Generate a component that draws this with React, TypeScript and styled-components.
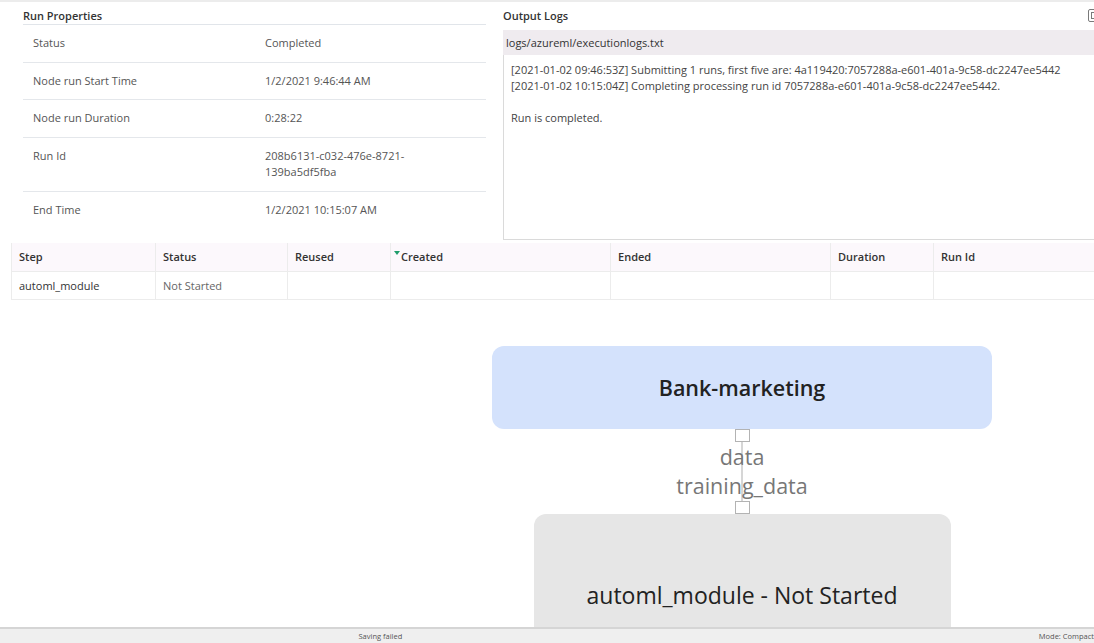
import React from "react";
import styled, { createGlobalStyle } from "styled-components";

const GlobalStyle = createGlobalStyle`
  html, body { margin: 0; padding: 0; }
  body {
    font-family: "Open Sans", "Noto Sans", sans-serif;
    background: #ffffff;
    width: 1094px;
    height: 643px;
    overflow: hidden;
  }
  * { box-sizing: border-box; }
`;

const Page = styled.div`
  width: 1094px;
  height: 643px;
  display: flex;
  flex-direction: column;
  overflow: hidden;
  border-top: 2px solid #ececec;
`;

const TopSection = styled.div`
  display: flex;
  gap: 17px;
  height: 238px;
  padding-left: 23px;
  flex-shrink: 0;
`;

const LeftPanel = styled.section`
  width: 463px;
  flex-shrink: 0;
  display: flex;
  flex-direction: column;
`;

const PanelTitle = styled.div`
  font-size: 11px;
  font-weight: 600;
  color: #333;
  line-height: 16px;
  padding-top: 6px;
`;

const PropTitle = styled(PanelTitle)`
  border-bottom: 1px solid #e1e5ea;
`;

const PropRow = styled.div`
  display: flex;
  padding: 10px 0 10px 10px;
  line-height: 16.5px;
  font-size: 11px;
  color: #555;
  border-bottom: 1px solid #e4e7eb;

  &:last-child {
    border-bottom: none;
  }
`;

const PropLabel = styled.div`
  width: 232px;
  flex-shrink: 0;
`;

const PropValue = styled.div`
  width: 170px;
`;

const RightPanel = styled.section`
  width: 600px;
  flex-shrink: 0;
  display: flex;
  flex-direction: column;
`;

const LogHeader = styled.div`
  height: 28px;
  display: flex;
  justify-content: space-between;
  align-items: flex-start;
  padding-right: 2px;
`;

const ExpandIcon = styled.span`
  width: 13px;
  height: 13px;
  margin-top: 7px;
  border: 1.5px solid #7a7a7a;
  border-radius: 2px;
  display: flex;
  align-items: center;
  justify-content: center;

  &::after {
    content: "";
    width: 5px;
    height: 5px;
    border: 1px solid #7a7a7a;
  }
`;

const PathBar = styled.div`
  height: 25px;
  line-height: 25px;
  background: #efebef;
  padding-left: 3px;
  font-size: 11px;
  color: #333;
`;

const LogBox = styled.pre`
  margin: 0;
  flex: 1;
  border: 1px solid #dadada;
  border-top: none;
  padding: 7px 7px;
  font-family: "Open Sans", "Noto Sans", sans-serif;
  font-size: 11px;
  line-height: 16px;
  color: #444;
  white-space: pre;
  overflow: hidden;
`;

const StepsTable = styled.table`
  margin: 3px 0 0 11px;
  border-collapse: collapse;
  table-layout: fixed;
  width: 1100px;
  flex-shrink: 0;
  font-size: 11px;
`;

const HeadCell = styled.th<{ $w: number }>`
  width: ${(p) => p.$w}px;
  height: 28px;
  padding: 0 0 0 7px;
  text-align: left;
  font-weight: 600;
  color: #333;
  background: #fcf8fc;
  border: 1px solid #ececec;
  border-top: none;
`;

const Cell = styled.td<{ $muted?: boolean }>`
  height: 28px;
  padding: 0 0 0 7px;
  color: ${(p) => (p.$muted ? "#666" : "#333")};
  border: 1px solid #ececec;
  white-space: nowrap;
`;

const SortMark = styled.span`
  display: inline-block;
  width: 0;
  height: 0;
  border-left: 3px solid transparent;
  border-right: 3px solid transparent;
  border-top: 4px solid #1f9d6b;
  vertical-align: top;
  margin: 2px 1px 0 -4px;
`;

const Canvas = styled.div`
  flex: 1;
  min-height: 0;
  overflow: hidden;
`;

const Graph = styled.div`
  margin: 46px 0 0 492px;
  width: 500px;
  display: flex;
  flex-direction: column;
  align-items: center;
`;

const DatasetNode = styled.div`
  width: 100%;
  height: 83px;
  border-radius: 12px;
  background: #d4e2fc;
  display: flex;
  align-items: center;
  justify-content: center;
  font-size: 21.5px;
  font-weight: 600;
  color: #222;
  flex-shrink: 0;
`;

const Connector = styled.div`
  position: relative;
  display: flex;
  flex-direction: column;
  align-items: center;
  flex-shrink: 0;

  &::before {
    content: "";
    position: absolute;
    left: 50%;
    top: 13px;
    bottom: 13px;
    width: 2px;
    margin-left: -1px;
    background: #d6d6d6;
  }
`;

const Port = styled.div`
  width: 15px;
  height: 13px;
  border: 1.5px solid #b3b3b3;
  background: #fff;
  position: relative;
  flex-shrink: 0;
`;

const PortLabel = styled.div`
  position: relative;
  font-size: 21.5px;
  line-height: 29.5px;
  color: #777;
  white-space: nowrap;
`;

const ModuleNode = styled.div`
  width: 417px;
  height: 130px;
  border-radius: 12px;
  background: #e6e6e6;
  padding-top: 67px;
  text-align: center;
  font-size: 23px;
  line-height: 28px;
  color: #222;
  flex-shrink: 0;
  white-space: nowrap;
`;

const StatusBar = styled.footer`
  height: 16px;
  flex-shrink: 0;
  border-top: 2px solid #d5d5d5;
  background: #efefef;
  display: flex;
  font-size: 7.5px;
  line-height: 14px;
  color: #555;
  white-space: nowrap;
`;

const SavingCell = styled.div`
  width: 784px;
  text-align: center;
`;

const ModeCell = styled.div`
  margin-left: 278px;
`;

const props = [
  { label: "Status", value: "Completed" },
  { label: "Node run Start Time", value: "1/2/2021 9:46:44 AM" },
  { label: "Node run Duration", value: "0:28:22" },
  { label: "Run Id", value: "" },
  { label: "End Time", value: "1/2/2021 10:15:07 AM" },
];

const columns: { name: string; w: number; sort?: boolean }[] = [
  { name: "Step", w: 144 },
  { name: "Status", w: 132 },
  { name: "Reused", w: 103 },
  { name: "Created", w: 220, sort: true },
  { name: "Ended", w: 220 },
  { name: "Duration", w: 103 },
  { name: "Run Id", w: 178 },
];

const logText = `[2021-01-02 09:46:53Z] Submitting 1 runs, first five are: 4a119420:7057288a-e601-401a-9c58-dc2247ee5442
[2021-01-02 10:15:04Z] Completing processing run id 7057288a-e601-401a-9c58-dc2247ee5442.

Run is completed.`;

export default function App() {
  return (
    <>
      <GlobalStyle />
      <Page>
        <TopSection>
          <LeftPanel>
            <PropTitle>Run Properties</PropTitle>
            {props.map((p) => (
              <PropRow key={p.label}>
                <PropLabel>{p.label}</PropLabel>
                <PropValue>
                  {p.label === "Run Id" ? (
                    <>
                      208b6131-c032-476e-8721-
                      <br />
                      139ba5df5fba
                    </>
                  ) : (
                    p.value
                  )}
                </PropValue>
              </PropRow>
            ))}
          </LeftPanel>
          <RightPanel>
            <LogHeader>
              <PanelTitle>Output Logs</PanelTitle>
              <ExpandIcon />
            </LogHeader>
            <PathBar>logs/azureml/executionlogs.txt</PathBar>
            <LogBox>{logText}</LogBox>
          </RightPanel>
        </TopSection>

        <StepsTable>
          <thead>
            <tr>
              {columns.map((c) => (
                <HeadCell key={c.name} $w={c.w}>
                  {c.sort && <SortMark />}
                  {c.name}
                </HeadCell>
              ))}
            </tr>
          </thead>
          <tbody>
            <tr>
              <Cell>automl_module</Cell>
              <Cell $muted>Not Started</Cell>
              <Cell />
              <Cell />
              <Cell />
              <Cell />
              <Cell />
            </tr>
          </tbody>
        </StepsTable>

        <Canvas>
          <Graph>
            <DatasetNode>Bank-marketing</DatasetNode>
            <Connector>
              <Port />
              <PortLabel>data</PortLabel>
              <PortLabel>training_data</PortLabel>
              <Port />
            </Connector>
            <ModuleNode>automl_module - Not Started</ModuleNode>
          </Graph>
        </Canvas>

        <StatusBar>
          <SavingCell>Saving failed</SavingCell>
          <ModeCell>Mode: Compact</ModeCell>
        </StatusBar>
      </Page>
    </>
  );
}
